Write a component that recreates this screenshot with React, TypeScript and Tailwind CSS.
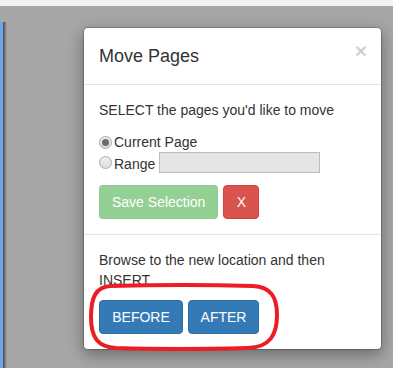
import React from 'react';

const Radio: React.FC<{ checked?: boolean }> = ({ checked }) => (
  <span className="flex h-[13px] w-[13px] items-center justify-center rounded-full border border-[#a9a9a9] bg-gradient-to-b from-[#f0f0f0] to-[#dcdcdc]">
    {checked && <span className="h-[7px] w-[7px] rounded-full bg-[#6b6b6b]" />}
  </span>
);

export default function App() {
  return (
    <div
      className="relative h-[368px] w-[393px] overflow-hidden bg-[#a6a6a6] text-[14px] leading-[20px] text-[#333]"
      style={{ fontFamily: '"Liberation Sans", Arial, sans-serif' }}
    >
      <div className="h-[6px] bg-[#f3f3f3]" />

      {/* window edge behind the backdrop */}
      <div className="absolute bottom-0 left-0 top-[22px] flex">
        <div className="w-[3px] bg-[#6aa6ea]" />
        <div className="w-[4px] bg-gradient-to-r from-[#4a4a4a] to-[#a6a6a6]" />
      </div>

      <div className="ml-[83px] mt-[21px] w-[299px] rounded-[5px] border border-black/20 bg-white bg-clip-padding shadow-[0_5px_15px_rgba(0,0,0,0.35)]">
        <div className="flex items-start justify-between border-b border-[#e5e5e5] px-[15px] py-[15px]">
          <h4 className="text-[18px] leading-[26px] text-[#333]">Move Pages</h4>
          <span className="mt-[-5px] mr-[-1px] text-[21px] font-bold leading-[26px] text-black/20">×</span>
        </div>

        <div className="border-b border-[#e5e5e5] p-[15px]">
          <p>SELECT the pages you'd like to move</p>
          <div className="mt-3">
            <label className="flex h-[20px] items-center">
              <Radio checked />
              <span className="ml-[2px]">Current Page</span>
            </label>
            <label className="flex h-[21px] items-center">
              <Radio />
              <span className="ml-[2px] mt-[3px]">Range</span>
              <span className="ml-[4px] h-[21px] w-[161px] border border-[#bdbdbd] bg-[#e5e5e5]" />
            </label>
          </div>
          <div className="mt-3 flex gap-[5px]">
            <button className="h-[34px] rounded-[4px] border border-[#4cae4c]/60 bg-[#5cb85c] px-3 text-white opacity-65">
              Save Selection
            </button>
            <button className="h-[34px] w-[36px] rounded-[4px] border border-[#d43f3a] bg-[#d9534f] text-white">
              X
            </button>
          </div>
        </div>

        <div className="p-[15px]">
          <p>
            Browse to the new location and then
            <br />
            INSERT
          </p>
          <div className="mt-[10px] flex gap-[5px]">
            <button className="h-[34px] w-[84px] rounded-[4px] border border-[#2e6da4] bg-[#337ab7] text-white">
              BEFORE
            </button>
            <button className="h-[34px] w-[71px] rounded-[4px] border border-[#2e6da4] bg-[#337ab7] text-white">
              AFTER
            </button>
          </div>
        </div>
      </div>

      {/* red annotation */}
      <svg className="absolute left-[88px] top-[283px]" width="192" height="68" viewBox="0 0 192 68">
        <path
          d="M22 3 C60 2 130 2 165 3 C183 4 189 14 189 32 C189 52 182 64 160 65 C120 66 60 66 28 65 C10 64 3 55 3 34 C3 14 8 4 22 3 Z"
          fill="none"
          stroke="#ee1c25"
          strokeWidth="4"
        />
      </svg>
    </div>
  );
}
